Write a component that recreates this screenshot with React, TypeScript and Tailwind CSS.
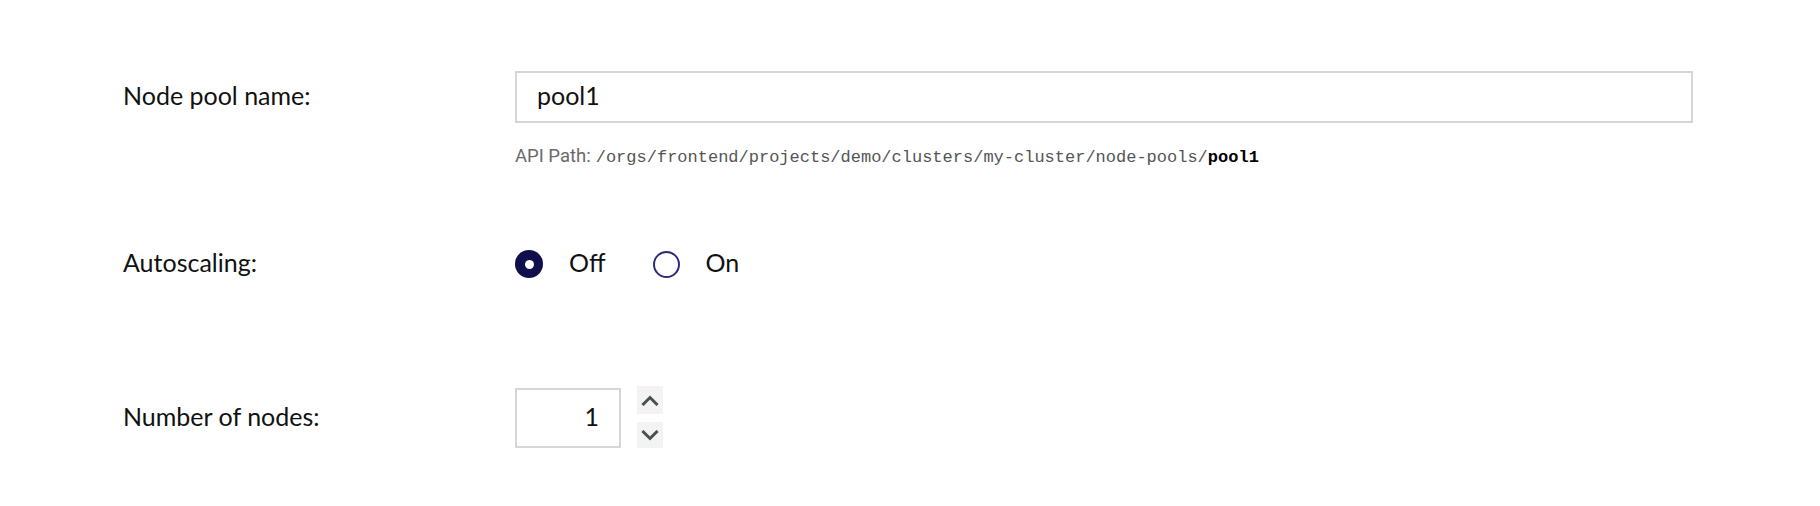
const Label = ({ children }: { children: React.ReactNode }) => (
  <div className="text-[25px] leading-none text-[#111] pb-[3px]">{children}</div>
);

const Radio = ({ checked, label }: { checked: boolean; label: string }) => (
  <label className="flex items-center gap-[26px] cursor-pointer">
    {checked ? (
      <span className="w-[28px] h-[28px] rounded-full bg-[#100e4b] flex items-center justify-center">
        <span className="w-[9px] h-[9px] rounded-full bg-white" />
      </span>
    ) : (
      <span className="w-[27px] h-[27px] rounded-full border-[2px] border-[#2e2c78] bg-white" />
    )}
    <span className="text-[25px] leading-none text-[#111] pb-[3px]">{label}</span>
  </label>
);

const Chevron = ({ up }: { up?: boolean }) => (
  <svg width="18" height="11" viewBox="0 0 18 11" fill="none">
    <path
      d={up ? "M2.5 9 L9 2.5 L15.5 9" : "M2.5 2 L9 8.5 L15.5 2"}
      stroke="#4b5151"
      strokeWidth="3"
      strokeLinecap="square"
    />
  </svg>
);

export default function App() {
  return (
    <div
      className="w-[1820px] h-[506px] bg-white pl-[123px] pr-[127px] pt-[71px]"
      style={{ fontFamily: "Lato, 'Noto Sans', sans-serif" }}
    >
      {/* Node pool name */}
      <div className="grid grid-cols-[392px_1fr]">
        <div className="flex items-center h-[52px]">
          <Label>Node pool name:</Label>
        </div>
        <div>
          <div className="h-[52px] border-[2px] border-[#d6d6d6] flex items-center px-[20px] pb-[2px] text-[25px] text-[#111]">
            pool1
          </div>
          <div className="mt-[21px] text-[18.5px] leading-[24px] text-[#6a6a6a] flex items-baseline">
            <span style={{ fontFamily: "Roboto, 'Liberation Sans', sans-serif" }}>API Path:</span>
            <span
              className="ml-[5px] text-[17px] text-[#555]"
              style={{ fontFamily: "'Liberation Mono', monospace" }}
            >
              /orgs/frontend/projects/demo/clusters/my-cluster/node-pools/
              <span className="font-bold text-black">pool1</span>
            </span>
          </div>
        </div>
      </div>

      {/* Autoscaling */}
      <div className="grid grid-cols-[392px_1fr] mt-[80px] h-[28px] items-center">
        <Label>Autoscaling:</Label>
        <div className="flex items-center gap-[47px]">
          <Radio checked label="Off" />
          <Radio checked={false} label="On" />
        </div>
      </div>

      {/* Number of nodes */}
      <div className="grid grid-cols-[392px_1fr] mt-[110px]">
        <div className="flex items-center h-[60px]">
          <Label>Number of nodes:</Label>
        </div>
        <div className="flex items-start gap-[16px]">
          <div className="w-[106px] h-[60px] border-[2px] border-[#d6d6d6] flex items-center justify-end pr-[20px] pb-[2px] text-[25px] text-[#111]">
            1
          </div>
          <div className="flex flex-col gap-[8px] -mt-[2px]">
            <button className="w-[26px] h-[28px] bg-[#f2f3f2] flex items-center justify-center">
              <Chevron up />
            </button>
            <button className="w-[26px] h-[26px] bg-[#f2f3f2] flex items-center justify-center">
              <Chevron />
            </button>
          </div>
        </div>
      </div>
    </div>
  );
}
